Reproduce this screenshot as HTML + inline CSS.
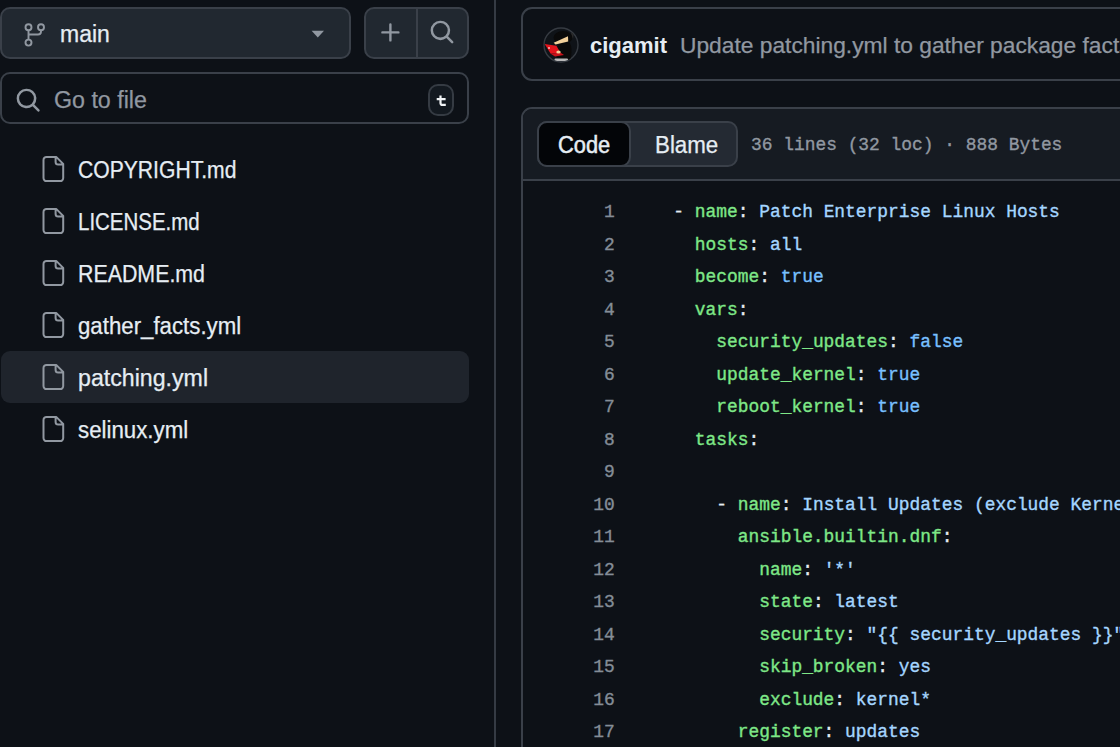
<!DOCTYPE html>
<html><head><meta charset="utf-8">
<style>
*{box-sizing:border-box;margin:0;padding:0}
html,body{width:1120px;height:747px;overflow:hidden;background:#0d1117;font-family:"Liberation Sans",sans-serif;color:#e6edf3}
.abs{position:absolute}
.btn{position:absolute;background:#212830;border:2px solid #3a4049;border-radius:10px}
.input{position:absolute;background:#0d1117;border:2px solid #3a4049;border-radius:10px}
.ui{font-size:22px;white-space:nowrap;position:absolute;-webkit-text-stroke:0.25px currentColor}
.row{position:absolute;left:1px;width:468px;height:52px;border-radius:9px}
.row.sel{background:#1f242c}
.fname{position:absolute;left:78px;font-size:23.5px;color:#e6edf3;white-space:nowrap;-webkit-text-stroke:0.25px currentColor}
.ficon{position:absolute;left:42px}
.code{font-family:"Liberation Mono",monospace;font-size:17.9px;white-space:pre;position:absolute;-webkit-text-stroke:0.35px currentColor}
.ln{position:absolute;right:0;color:#6e7681}
.k{color:#7ee787}.s{color:#a5d6ff}.c{color:#79c0ff}
</style></head><body>
<!-- left panel -->
<div class="abs" style="left:494px;top:0;width:2px;height:747px;background:#353b44"></div>

<div class="btn" style="left:0px;top:7px;width:351px;height:52px"></div>
<svg class="abs" style="left:0;top:0" width="60" height="60"><g fill="none" stroke="#9198a1" stroke-width="1.9"><circle cx="28.5" cy="27.3" r="3"/><circle cx="41" cy="27.3" r="3"/><circle cx="28.5" cy="42.6" r="3"/><path d="M28.5 30.3V39.6M41 30.3V31.5A3 3 0 0 1 38 34.5H28.5"/></g></svg>
<div class="ui" style="left:60px;top:21px;font-size:23px;color:#e6edf3">main</div>
<svg class="abs" style="left:311px;top:30px" width="14" height="9" viewBox="0 0 14 9"><path fill="#9198a1" d="M0.6 0.8h12.4L6.8 7.6z"/></svg>

<div class="btn" style="left:364px;top:7px;width:105px;height:52px"></div>
<div class="abs" style="left:416px;top:9px;width:2px;height:48px;background:#3a4049"></div>
<svg class="abs" style="left:377.7px;top:19.7px" width="25.6" height="25.6" viewBox="0 0 16 16"><path fill="#9198a1" d="M7.75 2a.75.75 0 0 1 .75.75V7h4.25a.75.75 0 0 1 0 1.5H8.5v4.25a.75.75 0 0 1-1.5 0V8.5H2.75a.75.75 0 0 1 0-1.5H7V2.75A.75.75 0 0 1 7.75 2Z"/></svg>
<svg class="abs" style="left:429px;top:19px" width="26" height="26" viewBox="0 0 16 16"><path fill="#9198a1" d="M10.68 11.74a6 6 0 0 1-7.922-8.982 6 6 0 0 1 8.982 7.922l3.04 3.04a.749.749 0 0 1-.326 1.275.749.749 0 0 1-.734-.215ZM11.5 7a4.499 4.499 0 1 0-8.997 0A4.499 4.499 0 0 0 11.5 7Z"/></svg>

<div class="input" style="left:0px;top:72px;width:469px;height:52px"></div>
<svg class="abs" style="left:14.7px;top:86.8px" width="26.3" height="26.3" viewBox="0 0 16 16"><path fill="#9198a1" d="M10.68 11.74a6 6 0 0 1-7.922-8.982 6 6 0 0 1 8.982 7.922l3.04 3.04a.749.749 0 0 1-.326 1.275.749.749 0 0 1-.734-.215ZM11.5 7a4.499 4.499 0 1 0-8.997 0A4.499 4.499 0 0 0 11.5 7Z"/></svg>
<div class="ui" style="left:54px;top:86.5px;font-size:23.5px;color:#9198a1;transform-origin:0 0;transform:scaleX(0.988)">Go to file</div>
<div class="abs" style="left:428px;top:84px;width:26px;height:32px;border:2px solid #353b43;border-radius:10px;background:#131920"></div>
<svg class="abs" style="left:428px;top:84px" width="26" height="32" viewBox="0 0 26 32"><g fill="none" stroke="#f0f3f6" stroke-width="2.2"><path d="M12.5 11.6V18.9A2 2 0 0 0 14.5 20.9H17.8M8.7 15.2H17.6"/></g></svg>

<!-- tree -->
<div class="row" style="top:143px"></div>
<div class="row" style="top:195px"></div>
<div class="row" style="top:247px"></div>
<div class="row" style="top:299px"></div>
<div class="row sel" style="top:351px"></div>
<div class="row" style="top:403px"></div>
<div class="ficon" style="top:155px"><svg width="24" height="28" viewBox="0 0 24 28"><path fill="none" stroke="#9198a1" stroke-width="2" stroke-linejoin="round" d="M4.5 1.9H14.2L21.2 8.9V23.1A3 3 0 0 1 18.2 26.1H4.5A3 3 0 0 1 1.5 23.1V4.9A3 3 0 0 1 4.5 1.9Z M13.6 2.2V7A2.5 2.5 0 0 0 16.1 9.5H21"/></svg></div>
<div class="fname" style="top:156.7px;transform-origin:0 0;transform:scaleX(0.898723404255319)">COPYRIGHT.md</div>
<div class="ficon" style="top:207px"><svg width="24" height="28" viewBox="0 0 24 28"><path fill="none" stroke="#9198a1" stroke-width="2" stroke-linejoin="round" d="M4.5 1.9H14.2L21.2 8.9V23.1A3 3 0 0 1 18.2 26.1H4.5A3 3 0 0 1 1.5 23.1V4.9A3 3 0 0 1 4.5 1.9Z M13.6 2.2V7A2.5 2.5 0 0 0 16.1 9.5H21"/></svg></div>
<div class="fname" style="top:208.7px;transform-origin:0 0;transform:scaleX(0.8706382978723405)">LICENSE.md</div>
<div class="ficon" style="top:259px"><svg width="24" height="28" viewBox="0 0 24 28"><path fill="none" stroke="#9198a1" stroke-width="2" stroke-linejoin="round" d="M4.5 1.9H14.2L21.2 8.9V23.1A3 3 0 0 1 18.2 26.1H4.5A3 3 0 0 1 1.5 23.1V4.9A3 3 0 0 1 4.5 1.9Z M13.6 2.2V7A2.5 2.5 0 0 0 16.1 9.5H21"/></svg></div>
<div class="fname" style="top:260.7px;transform-origin:0 0;transform:scaleX(0.9090212765957446)">README.md</div>
<div class="ficon" style="top:311px"><svg width="24" height="28" viewBox="0 0 24 28"><path fill="none" stroke="#9198a1" stroke-width="2" stroke-linejoin="round" d="M4.5 1.9H14.2L21.2 8.9V23.1A3 3 0 0 1 18.2 26.1H4.5A3 3 0 0 1 1.5 23.1V4.9A3 3 0 0 1 4.5 1.9Z M13.6 2.2V7A2.5 2.5 0 0 0 16.1 9.5H21"/></svg></div>
<div class="fname" style="top:312.7px;transform-origin:0 0;transform:scaleX(0.9464680851063829)">gather_facts.yml</div>
<div class="ficon" style="top:363px"><svg width="24" height="28" viewBox="0 0 24 28"><path fill="none" stroke="#9198a1" stroke-width="2" stroke-linejoin="round" d="M4.5 1.9H14.2L21.2 8.9V23.1A3 3 0 0 1 18.2 26.1H4.5A3 3 0 0 1 1.5 23.1V4.9A3 3 0 0 1 4.5 1.9Z M13.6 2.2V7A2.5 2.5 0 0 0 16.1 9.5H21"/></svg></div>
<div class="fname" style="top:364.7px;transform-origin:0 0;transform:scaleX(0.9857872340425531)">patching.yml</div>
<div class="ficon" style="top:415px"><svg width="24" height="28" viewBox="0 0 24 28"><path fill="none" stroke="#9198a1" stroke-width="2" stroke-linejoin="round" d="M4.5 1.9H14.2L21.2 8.9V23.1A3 3 0 0 1 18.2 26.1H4.5A3 3 0 0 1 1.5 23.1V4.9A3 3 0 0 1 4.5 1.9Z M13.6 2.2V7A2.5 2.5 0 0 0 16.1 9.5H21"/></svg></div>
<div class="fname" style="top:416.7px;transform-origin:0 0;transform:scaleX(0.9483404255319148)">selinux.yml</div>

<!-- right -->
<div class="abs" style="left:521px;top:7px;width:700px;height:74px;border:2px solid #3a4049;border-radius:11px"></div>
<svg class="abs" style="left:543px;top:26.5px" width="36" height="36" viewBox="0 0 36 36">
<defs><clipPath id="av"><circle cx="18" cy="18" r="16.5"/></clipPath></defs>
<circle cx="18" cy="18" r="17" fill="#0f1318" stroke="#363b42" stroke-width="1.4"/>
<g clip-path="url(#av)">
<path d="M14 31 C13 24 14 19 16.5 16.5 L26.5 15.5 C29 19 29 26 27.5 33 Z" fill="#0a0a0a"/>
<ellipse cx="20" cy="10.5" rx="9.5" ry="6.5" fill="#0a0a0a"/>
<path d="M28 6 L31 4 L30 12 Z" fill="#2a2a2a"/>
<path d="M10.7 15.8 L25 9.3 L25.2 14.6 L12.5 17.4 Z" fill="#f2d09a"/>
<path d="M1.6 16.9 L13.4 18.7 L17.3 25.6 L7.7 26.8 Z" fill="#e3141c"/>
<path d="M7.7 26.8 L17.3 25.6 L21 28 L12 29.5 Z" fill="#c9121a"/>
<circle cx="6" cy="21" r="1.1" fill="#f5b0b0"/>
<ellipse cx="15.5" cy="25" rx="2.2" ry="1.6" fill="#f2d09a"/>
<rect x="11.5" y="31.5" width="13.5" height="2.5" rx="1" fill="#b8b8b8"/>
</g>
</svg>
<div class="ui" style="left:590px;top:33px;font-weight:bold;color:#e6edf3;-webkit-text-stroke:0">cigamit</div>
<div class="ui" style="left:680px;top:33px;color:#9198a1;transform-origin:0 0;transform:scaleX(1.035)">Update patching.yml to gather package facts</div>

<div class="abs" style="left:521px;top:107px;width:700px;height:700px;border:2px solid #3a4049;border-radius:11px;background:#0d1117;overflow:hidden">
  <div class="abs" style="left:0;top:0;width:700px;height:72px;background:#161b22;border-bottom:2px solid #3a4049"></div>
</div>
<div class="abs" style="left:537px;top:121px;width:201px;height:46px;border:2px solid #3a4049;border-radius:10px;background:#242a33"></div>
<div class="abs" style="left:537px;top:121px;width:94px;height:46px;border:2px solid #3a4049;border-radius:10px;background:#030508"></div>
<div class="ui" style="left:558px;top:132px;font-size:23.5px;color:#e6edf3;-webkit-text-stroke:0.5px #e6edf3;transform-origin:0 0;transform:scaleX(0.93)">Code</div>
<div class="ui" style="left:655px;top:132px;font-size:23.5px;color:#e6edf3;transform-origin:0 0;transform:scaleX(0.95)">Blame</div>
<div class="code" style="left:751px;top:135px;color:#9198a1">36 lines (32 loc) · 888 Bytes</div>

<div class="code" style="left:560px;top:196.40px;height:32.5px;line-height:32.5px;width:54.700000000000045px;text-align:right;color:#848d97">1</div>
<div class="code" style="left:673.3px;top:196.40px;height:32.5px;line-height:32.5px;color:#e6edf3">- <span class="k">name</span>: <span class="s">Patch Enterprise Linux Hosts</span></div>
<div class="code" style="left:560px;top:228.90px;height:32.5px;line-height:32.5px;width:54.700000000000045px;text-align:right;color:#848d97">2</div>
<div class="code" style="left:673.3px;top:228.90px;height:32.5px;line-height:32.5px;color:#e6edf3">  <span class="k">hosts</span>: <span class="s">all</span></div>
<div class="code" style="left:560px;top:261.40px;height:32.5px;line-height:32.5px;width:54.700000000000045px;text-align:right;color:#848d97">3</div>
<div class="code" style="left:673.3px;top:261.40px;height:32.5px;line-height:32.5px;color:#e6edf3">  <span class="k">become</span>: <span class="c">true</span></div>
<div class="code" style="left:560px;top:293.90px;height:32.5px;line-height:32.5px;width:54.700000000000045px;text-align:right;color:#848d97">4</div>
<div class="code" style="left:673.3px;top:293.90px;height:32.5px;line-height:32.5px;color:#e6edf3">  <span class="k">vars</span>:</div>
<div class="code" style="left:560px;top:326.40px;height:32.5px;line-height:32.5px;width:54.700000000000045px;text-align:right;color:#848d97">5</div>
<div class="code" style="left:673.3px;top:326.40px;height:32.5px;line-height:32.5px;color:#e6edf3">    <span class="k">security_updates</span>: <span class="c">false</span></div>
<div class="code" style="left:560px;top:358.90px;height:32.5px;line-height:32.5px;width:54.700000000000045px;text-align:right;color:#848d97">6</div>
<div class="code" style="left:673.3px;top:358.90px;height:32.5px;line-height:32.5px;color:#e6edf3">    <span class="k">update_kernel</span>: <span class="c">true</span></div>
<div class="code" style="left:560px;top:391.40px;height:32.5px;line-height:32.5px;width:54.700000000000045px;text-align:right;color:#848d97">7</div>
<div class="code" style="left:673.3px;top:391.40px;height:32.5px;line-height:32.5px;color:#e6edf3">    <span class="k">reboot_kernel</span>: <span class="c">true</span></div>
<div class="code" style="left:560px;top:423.90px;height:32.5px;line-height:32.5px;width:54.700000000000045px;text-align:right;color:#848d97">8</div>
<div class="code" style="left:673.3px;top:423.90px;height:32.5px;line-height:32.5px;color:#e6edf3">  <span class="k">tasks</span>:</div>
<div class="code" style="left:560px;top:456.40px;height:32.5px;line-height:32.5px;width:54.700000000000045px;text-align:right;color:#848d97">9</div>
<div class="code" style="left:673.3px;top:456.40px;height:32.5px;line-height:32.5px;color:#e6edf3"></div>
<div class="code" style="left:560px;top:488.90px;height:32.5px;line-height:32.5px;width:54.700000000000045px;text-align:right;color:#848d97">10</div>
<div class="code" style="left:673.3px;top:488.90px;height:32.5px;line-height:32.5px;color:#e6edf3">    - <span class="k">name</span>: <span class="s">Install Updates (exclude Kernel)</span></div>
<div class="code" style="left:560px;top:521.40px;height:32.5px;line-height:32.5px;width:54.700000000000045px;text-align:right;color:#848d97">11</div>
<div class="code" style="left:673.3px;top:521.40px;height:32.5px;line-height:32.5px;color:#e6edf3">      <span class="k">ansible.builtin.dnf</span>:</div>
<div class="code" style="left:560px;top:553.90px;height:32.5px;line-height:32.5px;width:54.700000000000045px;text-align:right;color:#848d97">12</div>
<div class="code" style="left:673.3px;top:553.90px;height:32.5px;line-height:32.5px;color:#e6edf3">        <span class="k">name</span>: <span class="s">'*'</span></div>
<div class="code" style="left:560px;top:586.40px;height:32.5px;line-height:32.5px;width:54.700000000000045px;text-align:right;color:#848d97">13</div>
<div class="code" style="left:673.3px;top:586.40px;height:32.5px;line-height:32.5px;color:#e6edf3">        <span class="k">state</span>: <span class="s">latest</span></div>
<div class="code" style="left:560px;top:618.90px;height:32.5px;line-height:32.5px;width:54.700000000000045px;text-align:right;color:#848d97">14</div>
<div class="code" style="left:673.3px;top:618.90px;height:32.5px;line-height:32.5px;color:#e6edf3">        <span class="k">security</span>: <span class="s">"{{ security_updates }}"</span></div>
<div class="code" style="left:560px;top:651.40px;height:32.5px;line-height:32.5px;width:54.700000000000045px;text-align:right;color:#848d97">15</div>
<div class="code" style="left:673.3px;top:651.40px;height:32.5px;line-height:32.5px;color:#e6edf3">        <span class="k">skip_broken</span>: <span class="s">yes</span></div>
<div class="code" style="left:560px;top:683.90px;height:32.5px;line-height:32.5px;width:54.700000000000045px;text-align:right;color:#848d97">16</div>
<div class="code" style="left:673.3px;top:683.90px;height:32.5px;line-height:32.5px;color:#e6edf3">        <span class="k">exclude</span>: <span class="s">kernel*</span></div>
<div class="code" style="left:560px;top:716.40px;height:32.5px;line-height:32.5px;width:54.700000000000045px;text-align:right;color:#848d97">17</div>
<div class="code" style="left:673.3px;top:716.40px;height:32.5px;line-height:32.5px;color:#e6edf3">      <span class="k">register</span>: <span class="s">updates</span></div>
<div class="code" style="left:560px;top:748.90px;height:32.5px;line-height:32.5px;width:54.700000000000045px;text-align:right;color:#848d97">18</div>
<div class="code" style="left:673.3px;top:748.90px;height:32.5px;line-height:32.5px;color:#e6edf3">      <span class="k">when</span>: <span class="s">true</span></div>
</body></html>
